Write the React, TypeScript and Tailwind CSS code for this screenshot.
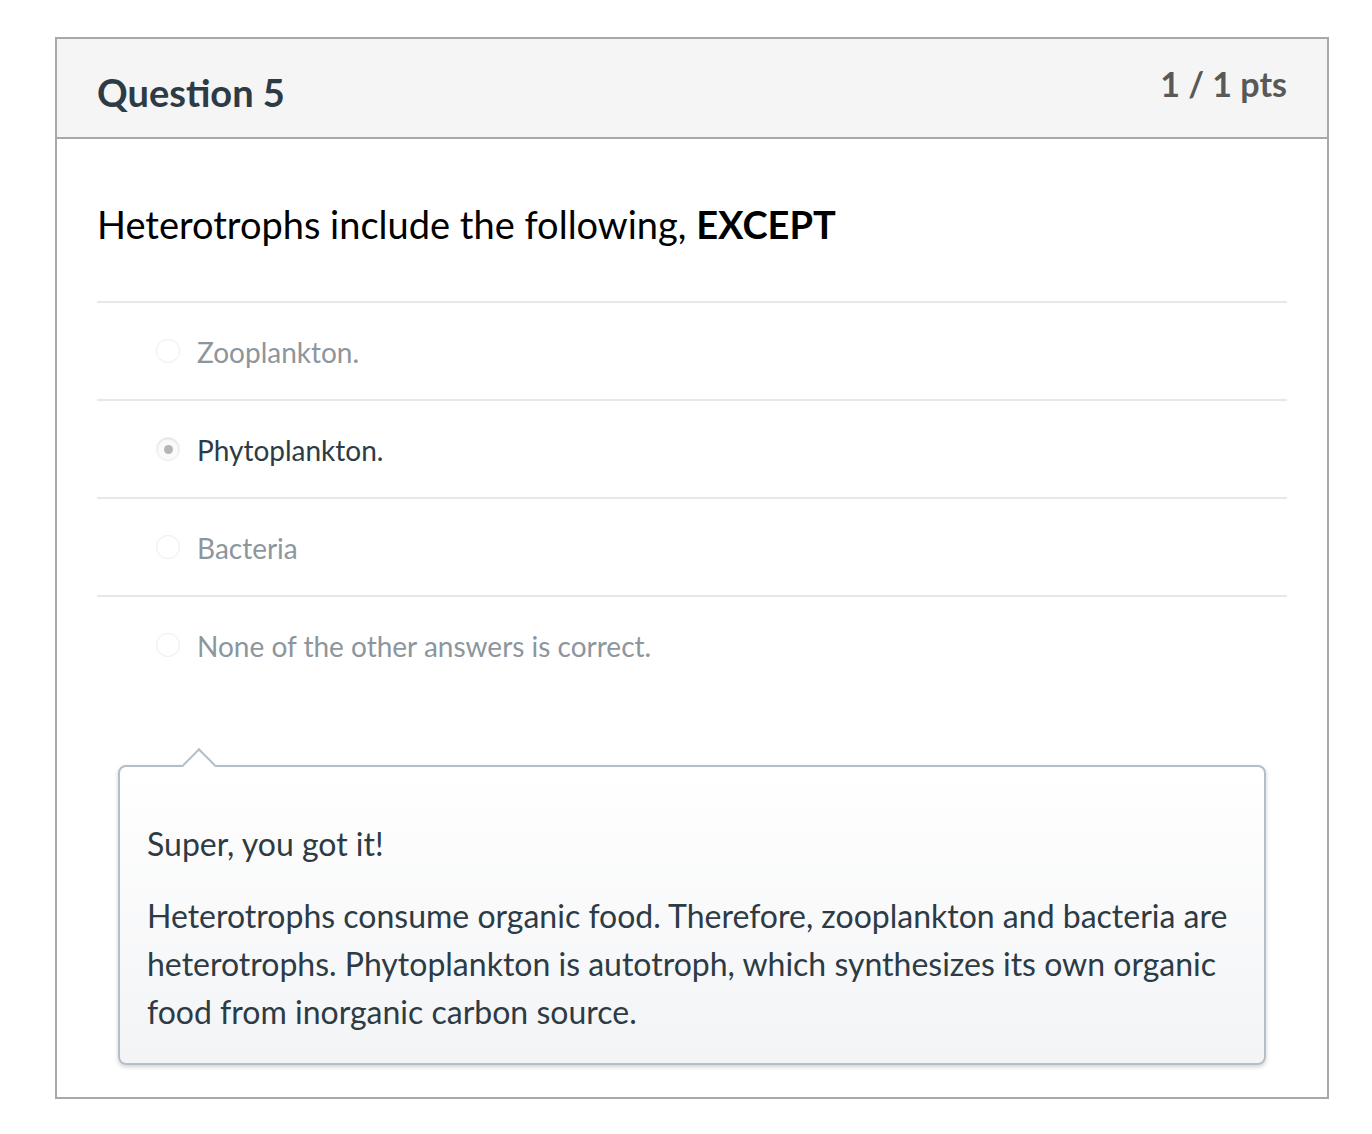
import React from "react";

const answers = [
  { text: "Zooplankton.", selected: false },
  { text: "Phytoplankton.", selected: true },
  { text: "Bacteria", selected: false },
  { text: "None of the other answers is correct.", selected: false },
];

function Radio({ checked }: { checked: boolean }) {
  return (
    <span
      className={
        "flex h-[24px] w-[24px] shrink-0 items-center justify-center rounded-full border border-[#ececec] " +
        (checked ? "bg-[#fafafa] shadow-[inset_0_1px_2px_rgba(0,0,0,0.12)]" : "bg-white")
      }
    >
      {checked && <span className="h-[9px] w-[9px] rounded-full bg-[#b5b5b5]" />}
    </span>
  );
}

export default function App() {
  return (
    <div
      className="min-h-[1134px] bg-white pl-[55px] pt-[37px]"
      style={{ fontFamily: "Lato, 'Open Sans', sans-serif" }}
    >
      <div className="w-[1274px] border-2 border-[#a8a8a8]">
        <div className="flex h-[100px] items-start justify-between border-b-2 border-[#a8a8a8] bg-[#f5f5f5] px-[40px]">
          <h2 className="mt-[25px] text-[38px] font-bold leading-[56px] text-[#2d3b45]">Question 5</h2>
          <div className="mt-[23px] text-[34px] font-bold leading-[44px] text-[#595959]">1 / 1 pts</div>
        </div>
        <div className="px-[40px] pb-[32px]">
          <div className="pt-[60px] pb-[52px] text-[38px] leading-[50px] text-black">
            Heterotrophs include the following, <span className="font-bold">EXCEPT</span>
          </div>
          <div>
            {answers.map((a, i) => (
              <div
                key={i}
                className="flex h-[98px] items-center border-t-2 border-[#e8e8e8] pl-[59px]"
              >
                <Radio checked={a.selected} />
                <span
                  className={
                    "ml-[17px] pt-[2px] text-[28px] leading-[40px] " +
                    (a.selected ? "text-[#2d3b45]" : "text-[#8d969d]")
                  }
                >
                  {a.text}
                </span>
              </div>
            ))}
          </div>
          <div className="relative mx-[21px] mt-[72px]">
            <div className="absolute left-[69px] top-[-12px] h-[24px] w-[24px] rotate-45 border-l-2 border-t-2 border-[#b3bec8] bg-white" />
            <div className="rounded-[8px] border-2 border-[#b3bec8] bg-gradient-to-b from-white to-[#f3f4f6] px-[27px] pt-[53px] pb-[27px] text-[#2d3b45] shadow-[0_2px_4px_rgba(0,0,0,0.18)]">
              <div className="relative text-[32px] leading-[48px]">Super, you got it!</div>
              <p className="mt-[24px] text-[32px] leading-[48px]">
                Heterotrophs consume organic food. Therefore, zooplankton and bacteria are heterotrophs. Phytoplankton is autotroph, which synthesizes its own organic food from inorganic carbon source.
              </p>
            </div>
          </div>
        </div>
      </div>
    </div>
  );
}
